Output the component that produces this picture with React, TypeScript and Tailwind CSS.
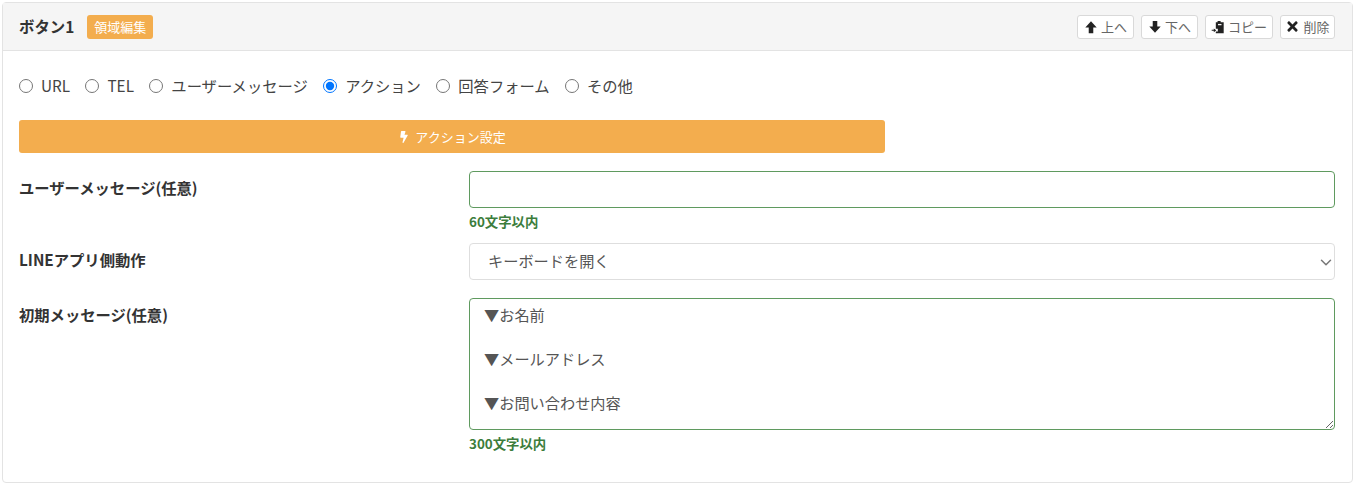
import React from "react";
import { FaTimes, FaBolt } from "react-icons/fa";

const font = "font-['Noto_Sans_CJK_JP','Noto_Sans',sans-serif]";

const radios = ["URL", "TEL", "ユーザーメッセージ", "アクション", "回答フォーム", "その他"];

const ArrowUp = () => (
  <svg viewBox="0 0 16 16" className="h-[14px] w-[14px]" fill="#222">
    <path d="M8 1.5L14.5 8.5H10.6V15H5.4V8.5H1.5Z" />
  </svg>
);
const ArrowDown = () => (
  <svg viewBox="0 0 16 16" className="h-[14px] w-[14px]" fill="#222">
    <path d="M8 14.5L14.5 7.5H10.6V1H5.4V7.5H1.5Z" />
  </svg>
);
const Clip = () => (
  <svg viewBox="0 0 16 16" className="h-[14px] w-[14px]" fill="#222">
    <path d="M7.5 1h3.5v1.5h3.5V15H5.5v-2h2.3v-3H5.5V2.5h2Z" />
    <path d="M8 4.5h4V6H8Z" fill="#f5f5f5" />
    <path d="M0.8 11.2h2.4V9.6L6 11.8 3.2 14V12.4H0.8Z" />
  </svg>
);

function HeaderBtn({ icon, label }: { icon: React.ReactNode; label: string }) {
  return (
    <button className="flex h-[24px] items-center justify-center gap-[3px] rounded-[3px] border border-[#d9d9d9] bg-white text-[13px] leading-none text-[#666]">
      <span className="flex items-center text-[13px] text-[#222]">{icon}</span>
      {label}
    </button>
  );
}

export default function App() {
  return (
    <div className={`${font} h-[486px] w-[1356px] bg-white px-[2px] pt-[2px] text-[#333]`}>
      <div className="h-[481px] w-[1351px] rounded-[4px] border border-[#e3e3e3]">
        <div className="flex h-[48px] items-center justify-between border-b border-[#e3e3e3] bg-[#f5f5f5] pl-[16px] pr-[17px]">
          <div className="flex items-center gap-[13px]">
            <span className="text-[15.4px] font-bold text-[#333]">ボタン1</span>
            <span className="flex h-[24px] items-center rounded-[3px] bg-[#f3ad4e] px-[7px] text-[13px] text-white">領域編集</span>
          </div>
          <div className="grid grid-cols-[57px_57px_68px_55px] gap-[7px]">
            <HeaderBtn icon={<ArrowUp />} label="上へ" />
            <HeaderBtn icon={<ArrowDown />} label="下へ" />
            <HeaderBtn icon={<Clip />} label="コピー" />
            <HeaderBtn icon={<FaTimes className="text-[15px]" />} label="削除" />
          </div>
        </div>
        <div className="px-[16px]">
          <div className="mt-[22px] flex h-[24px] items-center gap-[15.4px]">
            {radios.map((r, i) => (
              <label key={r} className="flex items-center gap-[8px] text-[15.3px] text-[#444]">
                <input type="radio" name="kind" defaultChecked={i === 3} className="m-0 mt-[1px] h-[14px] w-[14px]" />
                {r}
              </label>
            ))}
          </div>
          <button className="mt-[23px] flex h-[33px] w-[866px] items-center justify-center gap-[5px] rounded-[3px] bg-[#f3ad4e] text-[13px] text-white">
            <FaBolt className="text-[12px]" />
            アクション設定
          </button>
          <div className="mt-[18px] grid grid-cols-[450px_866px]">
            <label className="pt-[5px] text-[15.3px] font-bold text-[#333]">ユーザーメッセージ(任意)</label>
            <div>
              <input className="block h-[37px] w-full rounded-[4px] border border-[#5f9a5f] bg-white px-[14px] outline-none" />
              <div className="mt-[4px] text-[13.4px] font-bold leading-[18px] text-[#3c7d3c]">60文字以内</div>
            </div>
            <label className="mt-[13px] pt-[5px] text-[15.3px] font-bold text-[#333]">LINEアプリ側動作</label>
            <div className="relative mt-[13px]">
              <select className="block h-[37px] w-full appearance-none rounded-[4px] border border-[#dedede] bg-white px-[18px] pb-[2px] text-[15.2px] text-[#555] outline-none">
                <option>キーボードを開く</option>
              </select>
              <svg viewBox="0 0 12 7" className="pointer-events-none absolute right-[3px] top-[16px] h-[7px] w-[12px]" fill="none" stroke="#777" strokeWidth="1.5" strokeLinecap="round" strokeLinejoin="round">
                <path d="M1.5 1.2L6 5.7l4.5-4.5" />
              </svg>
            </div>
            <label className="mt-[18px] pt-[5px] text-[15.3px] font-bold text-[#333]">初期メッセージ(任意)</label>
            <div className="mt-[18px]">
              <textarea
                className="block h-[132px] w-full rounded-[4px] border border-[#5f9a5f] bg-white px-[14px] py-[4px] text-[15.2px] leading-[22px] text-[#555] outline-none"
                defaultValue={"▼お名前\n\n▼メールアドレス\n\n▼お問い合わせ内容"}
              />
              <div className="mt-[4px] text-[13.4px] font-bold leading-[18px] text-[#3c7d3c]">300文字以内</div>
            </div>
          </div>
        </div>
      </div>
    </div>
  );
}
